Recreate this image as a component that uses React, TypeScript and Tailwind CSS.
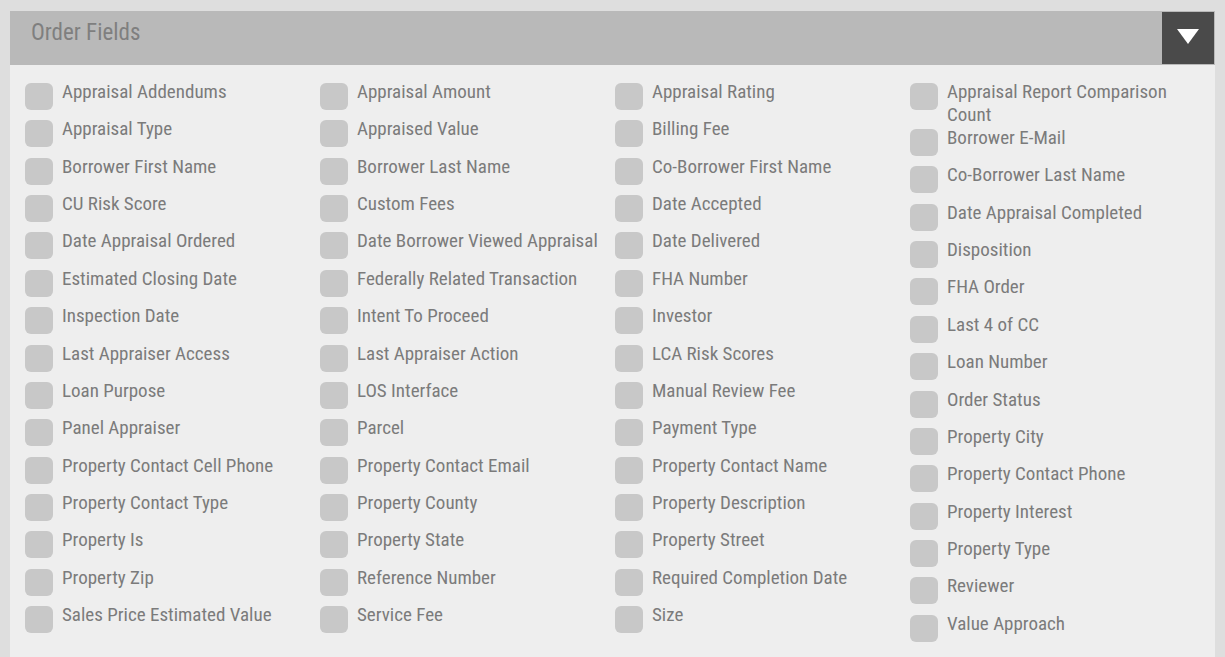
const rows: string[][] = [
  ['Appraisal Addendums', 'Appraisal Amount', 'Appraisal Rating', 'Appraisal Report Comparison Count'],
  ['Appraisal Type', 'Appraised Value', 'Billing Fee', 'Borrower E-Mail'],
  ['Borrower First Name', 'Borrower Last Name', 'Co-Borrower First Name', 'Co-Borrower Last Name'],
  ['CU Risk Score', 'Custom Fees', 'Date Accepted', 'Date Appraisal Completed'],
  ['Date Appraisal Ordered', 'Date Borrower Viewed Appraisal', 'Date Delivered', 'Disposition'],
  ['Estimated Closing Date', 'Federally Related Transaction', 'FHA Number', 'FHA Order'],
  ['Inspection Date', 'Intent To Proceed', 'Investor', 'Last 4 of CC'],
  ['Last Appraiser Access', 'Last Appraiser Action', 'LCA Risk Scores', 'Loan Number'],
  ['Loan Purpose', 'LOS Interface', 'Manual Review Fee', 'Order Status'],
  ['Panel Appraiser', 'Parcel', 'Payment Type', 'Property City'],
  ['Property Contact Cell Phone', 'Property Contact Email', 'Property Contact Name', 'Property Contact Phone'],
  ['Property Contact Type', 'Property County', 'Property Description', 'Property Interest'],
  ['Property Is', 'Property State', 'Property Street', 'Property Type'],
  ['Property Zip', 'Reference Number', 'Required Completion Date', 'Reviewer'],
  ['Sales Price Estimated Value', 'Service Fee', 'Size', 'Value Approach'],
];

const columns = [0, 1, 2, 3].map((c) => rows.map((r) => r[c]));

function Field({ label }: { label: string }) {
  return (
    <label className="flex items-start gap-[9px] min-h-[37.36px] cursor-pointer">
      <span className="mt-[3px] w-[28px] h-[27px] shrink-0 rounded-[6px] bg-[#c8c8c8]" />
      <span className="leading-[23px] text-[19px] text-[#7b7b7b] max-w-[250px]">{label}</span>
    </label>
  );
}

export default function App() {
  return (
    <div
      className="min-h-screen bg-[#dedede] pt-[11px] pl-[10px] pr-[10px]"
      style={{ fontFamily: '"Roboto Condensed", "Liberation Sans Narrow", Roboto, sans-serif' }}
    >
      <div className="bg-[#eeeeee] min-h-[646px]">
        <div className="flex items-stretch bg-[#b9b9b9] h-[54px]">
          <div className="flex-1 flex items-center pl-[21px] pb-[10px] text-[23px] text-[#7f7f7f]">Order Fields</div>
          <button className="w-[52px] my-[1px] mr-[1px] bg-[#4a4a4a] flex items-center justify-center" aria-label="Toggle">
            <svg width="22" height="15" viewBox="0 0 22 15" className="-mt-[4px]">
              <polygon points="0,0 22,0 11,15" fill="#ffffff" />
            </svg>
          </button>
        </div>
        <div className="grid grid-cols-[295px_295px_295px_1fr] px-[15px] pt-[15px]">
          {columns.map((col, i) => (
            <div key={i} className="flex flex-col">
              {col.map((label) => (
                <Field key={label} label={label} />
              ))}
            </div>
          ))}
        </div>
      </div>
    </div>
  );
}
